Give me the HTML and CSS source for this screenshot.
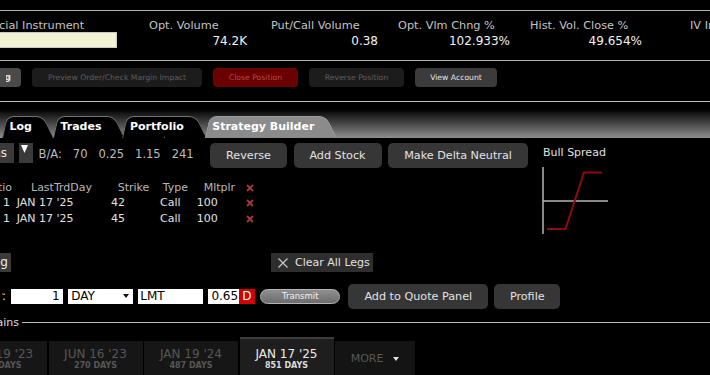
FILE: index.html
```html
<!DOCTYPE html>
<html lang="en">
<head>
    <meta charset="UTF-8">
    <meta name="viewport" content="width=device-width, initial-scale=1.0">
    <title>Option Trader - Strategy Builder</title>
    <link rel="stylesheet" href="styles.css">
</head>
<body>

<!-- Quote summary -->
<div class="quote-head">
    <div class="qcol qcol-instr">
        <div class="q-label">Financial Instrument</div>
        <div class="instr-box"></div>
    </div>
    <div class="qcol qcol-vol">
        <div class="q-label">Opt. Volume</div>
        <div class="q-value">74.2K</div>
    </div>
    <div class="qcol qcol-pc">
        <div class="q-label">Put/Call Volume</div>
        <div class="q-value">0.38</div>
    </div>
    <div class="qcol qcol-chg">
        <div class="q-label">Opt. Vlm Chng %</div>
        <div class="q-value">102.933%</div>
    </div>
    <div class="qcol qcol-hv">
        <div class="q-label">Hist. Vol. Close %</div>
        <div class="q-value">49.654%</div>
    </div>
    <div class="qcol qcol-iv">
        <div class="q-label">IV Index</div>
    </div>
</div>

<!-- Order actions -->
<div class="action-row">
    <div class="act-btn act-cut"><span class="clip">Trade Log</span></div>
    <div class="act-btn act-dim act-preview">Preview Order/Check Margin Impact</div>
    <div class="act-btn act-red">Close Position</div>
    <div class="act-btn act-dim act-reverse">Reverse Position</div>
    <div class="act-btn act-view">View Account</div>
</div>

<!-- Tabs -->
<div class="tab-strip">
    <div class="tab">Log</div>
    <div class="tab">Trades</div>
    <div class="tab">Portfolio</div>
    <div class="tab tab-active">Strategy Builder</div>
</div>

<!-- Strategy builder -->
<div class="builder">
    <div class="builder-main">
        <div class="toolbar">
            <div class="sel-cut clip">Options</div>
            <div class="sel-arrow">
                <svg width="7" height="8" viewBox="0 0 7 8"><polygon points="0,0 7,0 3.5,8" fill="#fff"/></svg>
            </div>
            <div class="ba">
                <span>B/A:</span><span>70</span><span>0.25</span><span>1.15</span><span>241</span>
            </div>
            <div class="tool-btns">
                <div class="tool-btn tb-reverse">Reverse</div>
                <div class="tool-btn tb-stock">Add Stock</div>
                <div class="tool-btn tb-delta">Make Delta Neutral</div>
            </div>
        </div>

        <div class="legs">
            <div class="leg-row leg-head">
                <span class="c-ratio">Ratio</span>
                <span class="c-date">LastTrdDay</span>
                <span class="c-strike">Strike</span>
                <span class="c-type">Type</span>
                <span class="c-mult">Mltplr</span>
                <span class="c-del"><svg class="x-del" width="8" height="8" viewBox="0 0 8 8"><path d="M1 1L7 7M7 1L1 7"/></svg></span>
            </div>
            <div class="leg-row">
                <span class="c-ratio">1</span>
                <span class="c-date">JAN 17 '25</span>
                <span class="c-strike">42</span>
                <span class="c-type">Call</span>
                <span class="c-mult">100</span>
                <span class="c-del"><svg class="x-del" width="8" height="8" viewBox="0 0 8 8"><path d="M1 1L7 7M7 1L1 7"/></svg></span>
            </div>
            <div class="leg-row">
                <span class="c-ratio">1</span>
                <span class="c-date">JAN 17 '25</span>
                <span class="c-strike">45</span>
                <span class="c-type">Call</span>
                <span class="c-mult">100</span>
                <span class="c-del"><svg class="x-del" width="8" height="8" viewBox="0 0 8 8"><path d="M1 1L7 7M7 1L1 7"/></svg></span>
            </div>
        </div>
    </div>

    <div class="payoff">
        <div class="payoff-title">Bull Spread</div>
        <svg width="68" height="68" viewBox="0 0 68 68">
            <line x1="1" y1="0" x2="1" y2="67" stroke="#b5b5b5" stroke-width="1.5"/>
            <line x1="1" y1="34" x2="66" y2="34" stroke="#b5b5b5" stroke-width="1.5"/>
            <polyline points="5,62 23.5,62 42,5.5 60,5.5" fill="none" stroke="#8e0b0b" stroke-width="2"/>
        </svg>
    </div>
</div>

<div class="leg-actions">
    <div class="leg-cut clip">Add Leg</div>
    <div class="btn-clear">
        <svg width="10" height="10" viewBox="0 0 10 10"><path d="M0.5 0.5L9.5 9.5M9.5 0.5L0.5 9.5" stroke="#c8c8c8" stroke-width="1.2"/></svg>
        <span>Clear All Legs</span>
    </div>
</div>

<!-- Order entry -->
<div class="order-row">
    <div class="qty-cut clip">Quantity:</div>
    <div class="field f-qty">1</div>
    <div class="field f-day">
        <span>DAY</span>
        <svg width="6" height="4" viewBox="0 0 6 4"><polygon points="0,0 6,0 3,4" fill="#111"/></svg>
    </div>
    <div class="field f-lmt">LMT</div>
    <div class="price">
        <div class="field f-price">0.65</div>
        <div class="d-flag">D</div>
    </div>
    <div class="transmit">Transmit</div>
    <div class="tool-btn ob-quote">Add to Quote Panel</div>
    <div class="tool-btn ob-profile">Profile</div>
</div>

<!-- Option chains -->
<div class="chains-head">
    <div class="chains-label clip">Option Chains</div>
</div>

<div class="expiries">
    <div class="exp">
        <div class="exp-date">MAY 19 '23</div>
        <div class="exp-days">242 DAYS</div>
    </div>
    <div class="exp">
        <div class="exp-date">JUN 16 '23</div>
        <div class="exp-days">270 DAYS</div>
    </div>
    <div class="exp">
        <div class="exp-date">JAN 19 '24</div>
        <div class="exp-days">487 DAYS</div>
    </div>
    <div class="exp exp-active">
        <div class="exp-date">JAN 17 '25</div>
        <div class="exp-days">851 DAYS</div>
    </div>
    <div class="exp exp-more">
        MORE
        <svg width="6" height="4" viewBox="0 0 6 4"><polygon points="0,0 6,0 3,4" fill="#e0e0e0"/></svg>
    </div>
</div>

</body>
</html>
```

FILE: styles.css
```css
/* Base */
html, body {
    margin: 0;
    overflow: hidden;
}

body {
    width: 710px;
    height: 375px;
    background: #000;
    color: #ddd;
    font-family: "DejaVu Sans", "Noto Sans", sans-serif;
    font-size: 11px;
}

/* boxes cut by the left edge: content overflows to the left */
.clip {
    display: flex;
    justify-content: flex-end;
    overflow: hidden;
    white-space: nowrap;
    flex: none;
}

/* Quote summary */
.quote-head {
    display: flex;
    margin: 10px 0 0 -31px;
    padding-top: 8px;
    height: 41px;
    border-top: 1px solid #b0b0b0;
    border-bottom: 1px solid #b0b0b0;
    white-space: nowrap;
}

.qcol { flex: none; }
.qcol-instr { width: 148px; margin-right: 32px; }
.qcol-vol { width: 98px; margin-right: 24px; }
.qcol-pc { width: 107px; margin-right: 20px; }
.qcol-chg { width: 112px; margin-right: 20px; }
.qcol-hv { width: 112px; margin-right: 48px; }
.qcol-iv { width: 112px; }

.q-label {
    font-size: 11.3px;
    line-height: 14px;
    color: #c4c4c4;
}

.q-value {
    margin-top: 1px;
    font-size: 12px;
    line-height: 15px;
    color: #f2f2f2;
    text-align: right;
}

.instr-box {
    margin-top: -1px;
    height: 14px;
    background: #f3f1d3;
    border: 1px solid #c9c9c0;
}

/* Order actions */
.action-row {
    display: flex;
    gap: 11px;
    margin-top: 7px;
}

.act-btn {
    flex: none;
    height: 19px;
    line-height: 19px;
    font-size: 7.7px;
    border-radius: 4px;
    text-align: center;
    white-space: nowrap;
}

.act-cut {
    display: flex;
    width: 21px;
    box-sizing: border-box;
    padding: 0 10px 0 5.5px;
    border-radius: 0 4px 4px 0;
    background: #4a4a4a;
    color: #e4e4e4;
    font-size: 9px;
    font-weight: bold;
}

.act-cut .clip { width: 5.5px; }

.act-dim { background: #1c1c1c; color: #5c5c5c; }
.act-preview { width: 170px; }
.act-reverse { width: 95px; }

.act-red {
    width: 85px;
    background: #6b0000;
    color: #b04c4c;
}

.act-view {
    width: 82px;
    background: #3b3b3b;
    color: #e6e6e6;
}

/* Tabs */
.tab-strip {
    display: flex;
    align-items: flex-end;
    margin-top: 14px;
    height: 36px;
    padding-left: 2px;
    border-top: 1px solid #bdbdbd;
    background: linear-gradient(#000 20%, #8e8e8e);
}

.tab {
    position: relative;
    z-index: 1;
    height: 22px;
    line-height: 22px;
    padding: 0 23px 0 7.5px;
    margin-right: -2px;
    font-weight: bold;
    color: #fff;
    white-space: nowrap;
}

.tab::before,
.tab::after {
    content: "";
    position: absolute;
    top: 0;
    bottom: 0;
    z-index: -1;
    background: #000;
    border-top: 1px solid #727272;
    transform-origin: bottom;
}

.tab::before {
    left: 0;
    right: 50%;
    border-left: 1px solid #727272;
    border-top-left-radius: 7px;
    transform: skewX(-12deg);
}

.tab::after {
    left: 50%;
    right: 0;
    border-right: 1px solid #727272;
    border-top-right-radius: 7px;
    transform: skewX(26deg);
}

.tab-active { z-index: 2; }

.tab-active::before,
.tab-active::after {
    background: #8b8b8b;
    border-color: #9d9d9d;
}

/* Strategy builder */
.builder {
    display: flex;
    padding-top: 5px;
}

.builder-main {
    flex: none;
    width: 543px;
}

.toolbar {
    display: flex;
    gap: 5.5px;
    height: 25px;
}

.sel-cut {
    width: 7px;
    height: 20px;
    padding-right: 6.5px;
    line-height: 20px;
    background: #3a3a3a;
    color: #e6e6e6;
    font-size: 12px;
}

.sel-arrow {
    flex: none;
    width: 14px;
    height: 20px;
    box-sizing: border-box;
    padding: 1.5px 0 0 2px;
    background: #3a3a3a;
}

.sel-arrow svg { display: block; }

.ba {
    flex: none;
    display: flex;
    gap: 11px;
    width: 166px;
    padding-top: 1px;
    font-size: 11.5px;
    line-height: 20px;
    color: #bdbdbd;
}

.tool-btns {
    display: flex;
    gap: 6.5px;
}

.tool-btn {
    flex: none;
    height: 25px;
    line-height: 25px;
    border-radius: 5px;
    background: #363636;
    color: #e2e2e2;
    font-size: 11.2px;
    text-align: center;
    white-space: nowrap;
}

.tb-reverse { width: 77px; }
.tb-stock { width: 88px; }
.tb-delta { width: 140px; }

/* Legs table */
.legs {
    margin: 12px 0 0 -17px;
}

.leg-row {
    display: grid;
    grid-template-columns: 33px 84px 55px 41px 46px 18px;
    line-height: 16px;
    color: #e0e0e0;
    white-space: nowrap;
}

.leg-row .c-ratio { text-align: right; padding-right: 6px; }
.leg-row .c-date { padding-left: 0.7px; }
.leg-row .c-strike { padding-left: 11px; }
.leg-row .c-type { padding-left: 5px; }
.leg-row .c-mult { padding-left: 0.7px; }
.leg-row .c-del { padding-left: 4px; }

.leg-head {
    line-height: 15px;
    color: #b8b8b8;
}

.leg-head .c-ratio { padding-right: 4px; }
.leg-head .c-date { padding-left: 15px; }
.leg-head .c-strike { padding-left: 17.7px; }
.leg-head .c-type { padding-left: 7.7px; }
.leg-head .c-mult { padding-left: 7.7px; }

.x-del {
    vertical-align: -1px;
    stroke: #a33a3a;
    stroke-width: 1.8;
}

/* Payoff diagram */
.payoff {
    flex: none;
    width: 80px;
}

.payoff-title {
    margin-top: 1.5px;
    line-height: 15px;
    color: #e0e0e0;
    white-space: nowrap;
}

.payoff svg {
    display: block;
    margin: 7.5px 0 0 -1px;
}

/* Leg actions */
.leg-actions {
    display: flex;
    margin-top: 18px;
    height: 19px;
}

.leg-cut {
    width: 8px;
    padding-right: 3px;
    line-height: 19px;
    background: #3a3a3a;
    color: #eee;
    font-size: 12px;
}

.btn-clear {
    display: flex;
    align-items: center;
    gap: 7px;
    margin-left: 260px;
    width: 102px;
    box-sizing: border-box;
    padding-left: 7px;
    background: #2e2e2e;
    color: #e0e0e0;
    white-space: nowrap;
}

/* Order entry */
.order-row {
    display: flex;
    align-items: center;
    gap: 5px;
    margin-top: 12px;
    height: 24px;
}

.qty-cut {
    width: 4px;
    margin-left: 2px;
    font-size: 12px;
    color: #ddd;
}

.field {
    flex: none;
    height: 15px;
    line-height: 15px;
    box-sizing: border-box;
    background: #fff;
    color: #000;
    font-size: 12px;
    white-space: nowrap;
}

.f-qty { width: 52px; padding-right: 3.4px; text-align: right; }

.f-day {
    display: flex;
    align-items: center;
    justify-content: space-between;
    width: 65px;
    padding: 0 4px 0 3.3px;
}

.f-lmt { width: 65px; padding-left: 2.3px; }

.price {
    display: flex;
    margin-left: -0.5px;
}

.f-price { width: 31.6px; padding-right: 1px; text-align: right; }

.d-flag {
    width: 15.7px;
    height: 15px;
    line-height: 15px;
    background: #d20000;
    color: #fff;
    font-size: 12px;
    text-align: center;
}

.transmit {
    flex: none;
    width: 80px;
    height: 15px;
    box-sizing: border-box;
    margin-left: 0.5px;
    margin-right: 3px;
    border: 1px solid #b4b4b4;
    border-radius: 8px;
    background: linear-gradient(#8f8f8f, #6c6c6c);
    color: #f2f2f2;
    font-size: 8.5px;
    line-height: 13px;
    text-align: center;
}

.ob-quote { width: 140px; }
.ob-profile { width: 66px; margin-left: 1px; }

/* Option chains */
.chains-head {
    display: flex;
    align-items: center;
    margin-top: 8px;
    height: 14px;
}

.chains-head::after {
    content: "";
    flex: 1;
    height: 1px;
    margin: 0 0 1px 2.7px;
    background: #bdbdbd;
}

.chains-label {
    width: 19px;
    line-height: 14px;
    color: #ddd;
}

.expiries {
    display: flex;
    gap: 1.5px;
    margin: 7px 0 0 -47px;
    height: 45px;
}

.exp {
    flex: none;
    width: 94px;
    margin-top: 4px;
    padding-top: 5.5px;
    box-sizing: border-box;
    background: #161616;
    color: #575757;
    text-align: center;
    white-space: nowrap;
}

.exp-date {
    font-size: 12px;
    line-height: 14px;
}

.exp-days {
    font-size: 8px;
    line-height: 10px;
    font-weight: bold;
}

.exp-active {
    margin-top: 0;
    padding-top: 7.5px;
    border-top: 2px solid #3c3c3c;
    background: #1e1e1e;
    color: #ececec;
}

.exp-active .exp-days { color: #dcdcdc; }

.exp-more {
    width: 80px;
    padding: 11px 0 0 15.7px;
    text-align: left;
    font-size: 11px;
    line-height: 14px;
    background: #141414;
}

.exp-more svg { margin-left: 6px; vertical-align: 1px; }
```
